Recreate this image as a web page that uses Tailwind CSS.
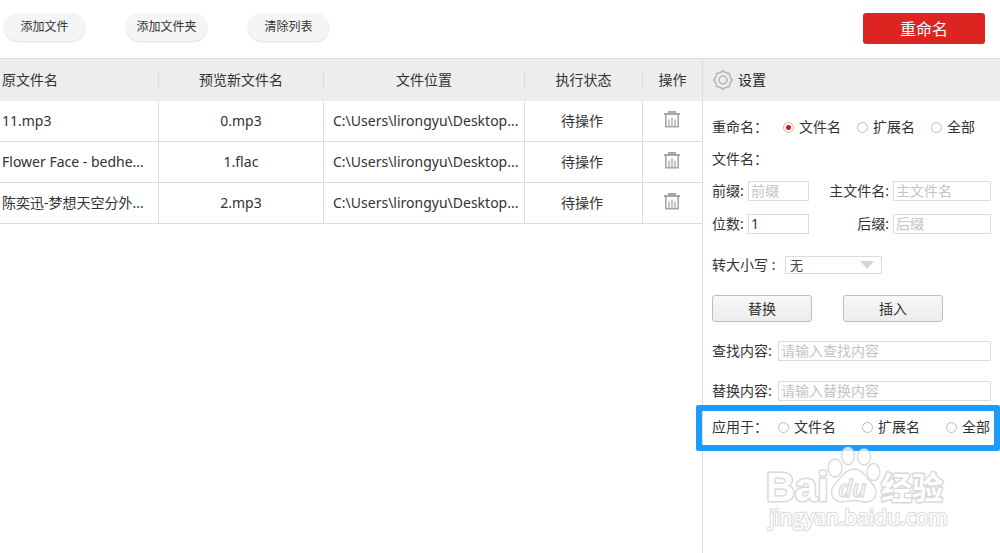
<!DOCTYPE html>
<html lang="zh-CN">
<head>
    <meta charset="UTF-8">
    <meta name="viewport" content="width=device-width, initial-scale=1.0">
    <title>批量重命名</title>
    <script src="https://cdn.jsdelivr.net/npm/@tailwindcss/browser@4"></script>
</head>
<body class="flex min-h-screen flex-col overflow-x-hidden bg-white font-['Noto_Sans','Noto_Sans_CJK_SC',sans-serif] text-[14px] leading-[20px] text-[#333]">
    <!-- toolbar -->
    <header class="flex items-start justify-between border-b border-[#dcdcdc] pt-[13px] pr-[15px] pb-[14px] pl-[4px]">
        <div class="flex gap-[41px] text-[12px]">
            <button type="button" class="h-[28px] w-[81px] rounded-full bg-[#f5f5f5] p-0 whitespace-nowrap shadow-[0_1px_2px_#ddd]">添加文件</button>
            <button type="button" class="h-[28px] w-[81px] rounded-full bg-[#f5f5f5] p-0 whitespace-nowrap shadow-[0_1px_2px_#ddd]">添加文件夹</button>
            <button type="button" class="h-[28px] w-[81px] rounded-full bg-[#f5f5f5] p-0 whitespace-nowrap shadow-[0_1px_2px_#ddd]">清除列表</button>
        </div>
        <button type="button" class="h-[31px] w-[122px] rounded-[3px] bg-[#dd2421] text-[16px] text-white">重命名</button>
    </header>

    <div class="flex flex-1">
        <!-- file list -->
        <main class="min-w-0 flex-1">
            <table class="w-full table-fixed border-separate border-spacing-0">
                <colgroup>
                    <col class="w-[159px]">
                    <col class="w-[165px]">
                    <col>
                    <col class="w-[118px]">
                    <col class="w-[59px]">
                </colgroup>
                <thead>
                    <tr class="h-[42px] bg-[#ededed]">
                        <th class="p-0 text-left font-normal"><div class="border-r border-[#dcdcdc] pl-[2px]">原文件名</div></th>
                        <th class="p-0 font-normal"><div class="border-r border-[#dcdcdc]">预览新文件名</div></th>
                        <th class="p-0 font-normal"><div class="border-r border-[#dcdcdc]">文件位置</div></th>
                        <th class="p-0 font-normal"><div class="border-r border-[#dcdcdc]">执行状态</div></th>
                        <th class="p-0 font-normal">操作</th>
                    </tr>
                </thead>
                <tbody id="fileRows"></tbody>
            </table>
        </main>

        <!-- settings -->
        <aside class="w-[298px] shrink-0 border-l border-[#dcdcdc]">
            <h2 class="flex h-[42px] items-center gap-[5px] bg-[#ededed] pl-[10px] text-[#222]">
                <svg class="size-[20px]" viewBox="0 0 20 20" fill="none" stroke="#b5b5b5" stroke-width="1.5" stroke-linejoin="round" aria-hidden="true">
                    <path d="M17.4 6.9Q17.6 8.3 19.2 10Q17.6 11.7 17.4 13.1Q16.6 14.2 16.5 16.5Q14.2 16.6 13.1 17.4Q11.7 17.6 10 19.2Q8.3 17.6 6.9 17.4Q5.8 16.6 3.5 16.5Q3.4 14.2 2.6 13.1Q2.4 11.7 .8 10Q2.4 8.3 2.6 6.9Q3.4 5.8 3.5 3.5Q5.8 3.4 6.9 2.6Q8.3 2.4 10 .8Q11.7 2.4 13.1 2.6Q14.2 3.4 16.5 3.5Q16.6 5.8 17.4 6.9Z"/>
                    <circle cx="10" cy="10" r="3.9"/>
                </svg>
                设置
            </h2>
            <form class="px-[9px] pt-[16px]">
                <fieldset class="flex items-center">
                    <legend class="float-left w-[71px]">重命名：</legend>
                    <div class="flex gap-[16px]">
                        <label class="flex items-center gap-[5px]"><input type="radio" name="target" checked class="size-[11px] appearance-none rounded-full border border-[#bbb] checked:bg-[radial-gradient(circle,#e01010_2px,transparent_3px)]">文件名</label>
                        <label class="flex items-center gap-[5px]"><input type="radio" name="target" class="size-[11px] appearance-none rounded-full border border-[#bbb] checked:bg-[radial-gradient(circle,#e01010_2px,transparent_3px)]">扩展名</label>
                        <label class="flex items-center gap-[5px]"><input type="radio" name="target" class="size-[11px] appearance-none rounded-full border border-[#bbb] checked:bg-[radial-gradient(circle,#e01010_2px,transparent_3px)]">全部</label>
                    </div>
                </fieldset>
                <p class="mt-[12px]">文件名：</p>

                <div class="mt-[12px] grid grid-cols-[36px_61px_1fr_98px] items-center gap-y-[13px]">
                    <label for="prefix" class="whitespace-nowrap">前缀:</label>
                    <input id="prefix" type="text" placeholder="前缀" class="h-[20px] w-full border border-[#dcdcdc] px-[2px] outline-none placeholder:text-[#c4c4c4]">
                    <label for="mainName" class="pr-[4px] text-right">主文件名:</label>
                    <input id="mainName" type="text" placeholder="主文件名" class="h-[20px] w-full border border-[#dcdcdc] px-[2px] outline-none placeholder:text-[#c4c4c4]">
                    <label for="digits" class="whitespace-nowrap">位数:</label>
                    <input id="digits" type="text" value="1" class="h-[20px] w-full border border-[#dcdcdc] px-[2px] outline-none">
                    <label for="suffix" class="pr-[4px] text-right">后缀:</label>
                    <input id="suffix" type="text" placeholder="后缀" class="h-[20px] w-full border border-[#dcdcdc] px-[2px] outline-none placeholder:text-[#c4c4c4]">
                </div>

                <div class="mt-[21px] flex items-center">
                    <label for="letterCase" class="w-[73px]">转大小写 :</label>
                    <div class="relative">
                        <select id="letterCase" class="block h-[18px] w-[97px] appearance-none border border-[#dcdcdc] bg-white pl-[4px] text-[13px] leading-[16px] text-[#444] outline-none">
                            <option>无</option>
                            <option>大写</option>
                            <option>小写</option>
                        </select>
                        <svg class="pointer-events-none absolute top-[5px] right-[8px] h-[8px] w-[14px]" viewBox="0 0 14 8" fill="#d6d6d6" aria-hidden="true"><path d="M0 0H14L7 8Z"/></svg>
                    </div>
                </div>

                <div class="mt-[20px] flex gap-[31px]">
                    <button type="button" class="h-[27px] w-[100px] rounded-[3px] border border-[#bdbdbd] bg-linear-to-b from-[#f8f8f8] to-[#ececec]">替换</button>
                    <button type="button" class="h-[27px] w-[100px] rounded-[3px] border border-[#bdbdbd] bg-linear-to-b from-[#f8f8f8] to-[#ececec]">插入</button>
                </div>

                <div class="mt-[19px] flex flex-col gap-[20px]">
                    <div class="flex items-center">
                        <label for="find" class="w-[66px] whitespace-nowrap">查找内容:</label>
                        <input id="find" type="text" placeholder="请输入查找内容" class="h-[20px] min-w-0 flex-1 border border-[#dcdcdc] px-[2px] outline-none placeholder:text-[#c4c4c4]">
                    </div>
                    <div class="flex items-center">
                        <label for="replace" class="w-[66px] whitespace-nowrap">替换内容:</label>
                        <input id="replace" type="text" placeholder="请输入替换内容" class="h-[20px] min-w-0 flex-1 border border-[#dcdcdc] px-[2px] outline-none placeholder:text-[#c4c4c4]">
                    </div>
                </div>

                <!-- the frame runs past the panel on both sides -->
                <fieldset class="relative -mr-[9px] -ml-[16px] mt-[4px] flex h-[46px] items-center rounded-[2px] border-[6px] border-[#1b9cff] pb-[2px] pl-[10px]">
                    <legend class="float-left w-[66px] p-0">应用于：</legend>
                    <div class="flex gap-[26px] whitespace-nowrap">
                        <label class="flex items-center gap-[5px]"><input type="radio" name="scope" class="size-[11px] appearance-none rounded-full border border-[#bbb] checked:bg-[radial-gradient(circle,#e01010_2px,transparent_3px)]">文件名</label>
                        <label class="flex items-center gap-[5px]"><input type="radio" name="scope" class="size-[11px] appearance-none rounded-full border border-[#bbb] checked:bg-[radial-gradient(circle,#e01010_2px,transparent_3px)]">扩展名</label>
                        <label class="flex items-center gap-[5px]"><input type="radio" name="scope" class="size-[11px] appearance-none rounded-full border border-[#bbb] checked:bg-[radial-gradient(circle,#e01010_2px,transparent_3px)]">全部</label>
                    </div>
                </fieldset>
            </form>
        </aside>
    </div>

    <!-- watermark -->
    <svg class="pointer-events-none absolute top-[440px] right-[50px] h-[100px] w-[200px]" viewBox="0 0 200 100" fill="#fff" fill-opacity="0.75" stroke="#d9d9d9" stroke-width="1.3" stroke-linejoin="round" role="img" aria-label="Baidu 经验">
        <g stroke-width="3" paint-order="stroke" fill-opacity="1">
            <text x="16" y="61" font-family="Liberation Sans" font-weight="bold" font-size="40">Bai</text>
            <text x="131" y="59" font-family="Noto Sans CJK SC" font-weight="bold" font-size="31">经验</text>
        </g>
        <ellipse cx="85" cy="28" rx="7" ry="9"/>
        <ellipse cx="98" cy="16" rx="6.5" ry="8.5"/>
        <ellipse cx="114" cy="17" rx="6.5" ry="8"/>
        <ellipse cx="123.5" cy="32" rx="6.5" ry="8.5"/>
        <path d="M104 29C111 29 115 34 118 39C122 44 126 46 126 52C126 59 121 62 115 62C111 62 108 60.500 104 60.500C100 60.500 97 62 92 62C86 62 81.500 58 81.500 52C81.500 46 86 43 89.500 39C93 34 97 29 104 29Z"/>
        <text x="88" y="57" font-family="Open Sans" font-weight="600" font-style="italic" font-size="24">du</text>
        <text x="19" y="85" font-family="Open Sans" font-size="21" stroke="#dedede" stroke-width="2.5" paint-order="stroke" fill-opacity="1">jingyan.baidu.com</text>
    </svg>

    <script>
        const files = [
            { name: '11.mp3', preview: '0.mp3' },
            { name: 'Flower Face - bedhe...', preview: '1.flac' },
            { name: '陈奕迅-梦想天空分外...', preview: '2.mp3' }
        ];

        document.getElementById('fileRows').innerHTML = files.map(file => `
            <tr class="h-[41px]">
                <td class="truncate border-r border-b border-[#dcdcdc] p-0 pl-[2px]">${file.name}</td>
                <td class="border-r border-b border-[#dcdcdc] p-0 text-center">${file.preview}</td>
                <td class="truncate border-r border-b border-[#dcdcdc] p-0 pl-[9px]">C:\\Users\\lirongyu\\Desktop...</td>
                <td class="border-r border-b border-[#dcdcdc] p-0 pr-[3px] text-center">待操作</td>
                <td class="border-b border-[#dcdcdc] p-0 pr-[2px] pb-[3px]">
                    <button type="button" aria-label="删除" class="mx-auto block">
                        <svg class="h-[17px] w-[16px]" viewBox="0 0 16 17" fill="none" stroke="#a6a6a6">
                            <path stroke-width="2" d="M4 1H12M0 3H16"/>
                            <path stroke-width="1.6" d="M1.8 3V15.700H14.200V3"/>
                            <path stroke-width="1.3" d="M5 8.500V15M8 6.500V15M11 8.500V15"/>
                        </svg>
                    </button>
                </td>
            </tr>
        `).join('');
    </script>
</body>
</html>
